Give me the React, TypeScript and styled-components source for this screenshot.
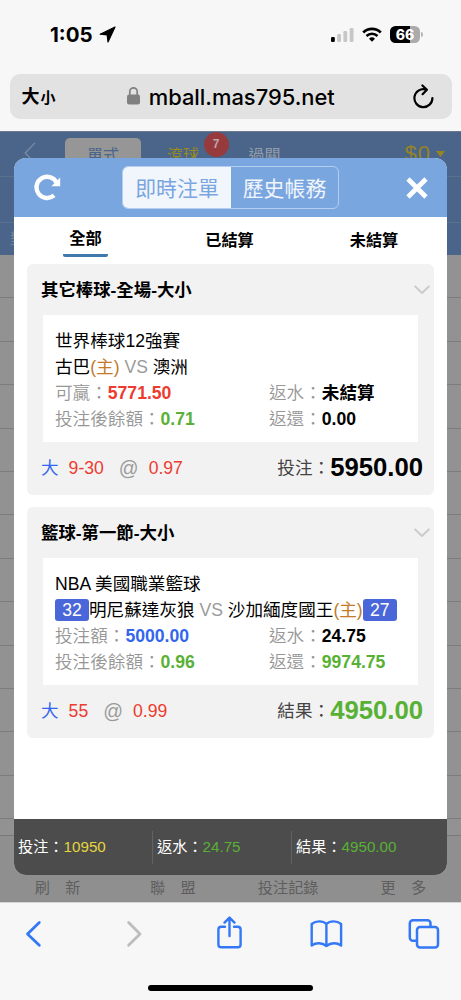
import React from 'react';
import styled, { createGlobalStyle, css } from 'styled-components';

const latin = '"Liberation Sans", "Noto Sans CJK TC", sans-serif';
const system = 'Inter, "Noto Sans CJK TC", sans-serif';

const Global = createGlobalStyle`
  *, *::before, *::after { box-sizing: border-box; }
  body { margin: 0; background: #f7f7f7; font-family: ${latin}; color: #000; }
`;

const Phone = styled.div`
  width: 461px;
  height: 1000px;
  display: flex;
  flex-direction: column;
  background: #f7f7f7;
  overflow: hidden;
`;

/* ---------- browser chrome ---------- */

const StatusBar = styled.div`
  height: 74px;
  flex: none;
  display: flex;
  align-items: center;
  padding: 0 38px 5px 50px;
  font-family: ${system};
`;

const Clock = styled.span`
  font-size: 20.5px;
  font-weight: 700;
  letter-spacing: 0;
  line-height: 24px;
  width: 48.5px;
  white-space: nowrap;
`;

const StatusIcons = styled.div`
  margin-left: auto;
  display: flex;
  align-items: center;
  gap: 8px;
`;

const Battery = styled.div`
  position: relative;
  width: 30px;
  height: 17px;
  margin-right: 3px;
  border-radius: 5.5px;
  background: linear-gradient(90deg, #000 66%, #ababab 66%);
  color: #fff;
  font-size: 14px;
  font-weight: 800;
  line-height: 17px;
  text-align: center;

  &::after {
    content: '';
    position: absolute;
    right: -3px;
    top: 6px;
    width: 2px;
    height: 5px;
    border-radius: 0 2px 2px 0;
    background: #b5b5b5;
  }
`;

const AddressBar = styled.div`
  height: 45px;
  flex: none;
  margin: 0 9.5px 12px;
  padding: 0 18px 0 12px;
  border-radius: 10px;
  background: #e2e2e2;
  display: grid;
  grid-template-columns: 60px 1fr 53px;
  align-items: center;
  font-family: ${system};
`;

const TextSize = styled.span`
  padding-top: 2px;
  font-size: 18px;
  font-weight: 700;
  line-height: 24px;
  white-space: nowrap;
  small { font-size: 15px; margin-left: 1px; }
`;

const Address = styled.div`
  display: flex;
  align-items: center;
  justify-content: center;
  gap: 8.5px;
  font-size: 21.9px;
  font-weight: 500;
  line-height: 26px;
  white-space: nowrap;
`;

const Reload = styled.div`
  display: flex;
  justify-content: flex-end;
`;

const BrowserTools = styled.nav`
  height: 98px;
  flex: none;
  display: flex;
  flex-direction: column;
  justify-content: space-between;
  align-items: center;
  padding: 13px 0 9px;
  border-top: 1px solid #d4d4d4;
`;

const ToolRow = styled.div`
  width: 100%;
  padding: 0 21px 0 20px;
  display: flex;
  justify-content: space-between;
  svg { display: block; overflow: visible; }
`;

const HomeIndicator = styled.div`
  width: 165px;
  height: 6px;
  border-radius: 3px;
  background: #000;
`;

/* ---------- dimmed page ---------- */

const Page = styled.main`
  position: relative;
  flex: 1;
  display: flex;
  flex-direction: column;
  background: #8f8f8f;
  overflow: hidden;
`;

const PageHeader = styled.header`
  height: 124px;
  flex: none;
  background: #4a6589;
  border-top: 1px solid #6b7a8e;
`;

const SportNav = styled.div`
  height: 45px;
  padding-top: 6px;
  display: flex;
  border-bottom: 1px solid #58718f;
  font-size: 16px;
  line-height: 35px;
  color: #939da9;
  white-space: nowrap;
`;

const BackSlot = styled.div`
  width: 65px;
  padding: 4px 0 0 24px;
  svg { display: block; }
`;

const NavTab = styled.div<{ $w: number; $active?: boolean; $color?: string }>`
  position: relative;
  width: ${(p) => p.$w}px;
  height: 34px;
  text-align: center;
  ${(p) => p.$color && css`color: ${p.$color};`}
  ${(p) => p.$active && css`
    background: #969696;
    color: #4a6589;
    border-radius: 5px;
  `}
`;

const CountBadge = styled.span`
  position: absolute;
  left: 62.5px;
  top: -6px;
  width: 25px;
  height: 25px;
  border-radius: 50%;
  background: #973a3d;
  color: #b9a7a9;
  font-size: 12px;
  font-weight: 700;
  line-height: 25px;
`;

const Balance = styled.div`
  margin-left: auto;
  padding-right: 16px;
  display: flex;
  align-items: center;
  gap: 5px;
  height: 31px;
  font-size: 22px;
  letter-spacing: 1px;
  color: #968423;
`;

const SubNav = styled.div`
  height: 46px;
  border-bottom: 1px solid #58718f;
`;

const ColumnHead = styled.div`
  height: 32px;
  padding-left: 10px;
  font-size: 15px;
  line-height: 31px;
  color: #75889f;
`;

const Rows = styled.div`
  height: 581px;
  flex: none;
  background: repeating-linear-gradient(180deg, #929292 0 42.4px, #7c7c7c 42.4px 43.4px);
  border-bottom: 1px solid #777;
`;

const PageFooter = styled.footer`
  flex: 1;
  display: grid;
  grid-template-columns: repeat(4, 1fr);
  align-items: end;
  padding-bottom: 2px;
  font-size: 15.2px;
  line-height: 24px;
  text-align: center;
  color: #5e5e5e;
  white-space: pre;
`;

const Wide = styled.span`
  letter-spacing: 15.4px;
  margin-right: -15.4px;
`;

/* ---------- modal ---------- */

const Modal = styled.section`
  position: absolute;
  left: 14px;
  top: 27px;
  width: 433px;
  height: 717px;
  border-radius: 12px;
  overflow: hidden;
  background: #fff;
  display: flex;
  flex-direction: column;
`;

const ModalHeader = styled.header`
  height: 59px;
  flex: none;
  padding: 0 19px 0 20px;
  display: grid;
  grid-template-columns: 88px 217px 1fr;
  align-items: center;
  background: #7aa6e0;
  svg { display: block; }
  svg:last-child { justify-self: end; }
`;

const Segments = styled.div`
  height: 43px;
  border: 1px solid #b5cdee;
  border-radius: 6px;
  display: grid;
  grid-template-columns: 108px 1fr;
  overflow: hidden;
`;

const Segment = styled.button<{ $active?: boolean }>`
  border: 0;
  padding: 0;
  background: ${(p) => (p.$active ? '#f1f5fc' : 'transparent')};
  color: ${(p) => (p.$active ? '#7aa6e0' : '#f1f5fc')};
  font: 400 20.9px/44px ${latin};
`;

const Tabs = styled.div`
  height: 47px;
  flex: none;
  padding-right: 1px;
  display: grid;
  grid-template-columns: 143px 145px 1fr;
  justify-items: center;
`;

const Tab = styled.div<{ $active?: boolean }>`
  height: 40px;
  padding: ${(p) => (p.$active ? '8px 6px 0' : '10px 0 0')};
  font-size: 16.2px;
  font-weight: 700;
  line-height: 27px;
  border-bottom: 3.5px solid ${(p) => (p.$active ? '#3f79ab' : 'transparent')};
  border-radius: 2px;
`;

const TicketList = styled.div`
  flex: 1;
  padding: 0 13px;
  display: flex;
  flex-direction: column;
  gap: 12px;
`;

const Ticket = styled.article`
  height: 231px;
  padding: 0 16px;
  border-radius: 6px;
  background: #f2f2f2;
  font-size: 17.6px;
  line-height: 26px;
  white-space: nowrap;
`;

const TicketHead = styled.div`
  height: 51px;
  margin: 0 -12px 0 -2px;
  display: flex;
  align-items: center;
  justify-content: space-between;
  font-size: 17.4px;
  font-weight: 700;
`;

const TicketBody = styled.div`
  height: 127px;
  padding: 13px 12px 0;
  background: #fff;
`;

const Line = styled.div`
  height: 25.9px;
`;

const Pair = styled(Line)`
  display: grid;
  grid-template-columns: 214px 1fr;
`;

const Label = styled.span`
  color: #969696;
  font-weight: 350;
`;

const Value = styled.b<{ $color?: string }>`
  color: ${(p) => p.$color ?? '#000'};
  font-weight: 700;
`;

const Tint = styled.span<{ $color: string }>`
  color: ${(p) => p.$color};
`;

const At = styled.span`
  color: #9b9b9b;
  font-size: 19.5px;
`;

const Score = styled.span`
  display: inline-block;
  width: 34px;
  height: 22px;
  border-radius: 3px;
  background: #4a67d9;
  color: #fff;
  line-height: 22px;
  text-align: center;
`;

const TicketFoot = styled.div`
  height: 51px;
  margin: 0 -5px 0 -2px;
  padding-top: 1px;
  display: flex;
  align-items: center;
  justify-content: space-between;
`;

const Pick = styled.div`
  display: flex;
  align-items: center;
  gap: 10px;
`;

const Odds = styled.span`
  display: flex;
  align-items: center;
  gap: 10px;
  margin-left: 5px;
`;

const Total = styled.div`
  display: flex;
  align-items: center;
  color: #444;
  b { font-size: 25.7px; line-height: 30px; margin-top: -2px; }
`;

const Summary = styled.footer`
  height: 56px;
  flex: none;
  display: grid;
  grid-template-columns: 138px 139px 1fr;
  align-items: center;
  background: #4c4c4c;
  color: #fff;
  font-size: 15.2px;
  line-height: 24px;
`;

const SummaryItem = styled.div`
  height: 33px;
  padding: 4px 0 0 4px;
  white-space: nowrap;
  & + & { border-left: 1px solid #626262; }
`;

const RED = '#ee3b2f';
const GREEN = '#58b135';
const BLUE = '#3366ee';
const ORANGE = '#c47a2b';
const GREY = '#9b9b9b';

type TicketData = {
  title: string;
  league: string;
  match: React.ReactNode;
  first: [string, string, string];
  rebate: string;
  balance: string;
  returned: [string, string?];
  line: string;
  odds: string;
  total: [string, string, string?];
};

const tickets: TicketData[] = [
  {
    title: '其它棒球-全場-大小',
    league: '世界棒球12強賽',
    match: (
      <>
        古巴<Tint $color={ORANGE}>(主)</Tint> <Tint $color={GREY}>VS</Tint> 澳洲
      </>
    ),
    first: ['可贏：', '5771.50', RED],
    rebate: '未結算',
    balance: '0.71',
    returned: ['0.00'],
    line: '9-30',
    odds: '0.97',
    total: ['投注：', '5950.00'],
  },
  {
    title: '籃球-第一節-大小',
    league: 'NBA 美國職業籃球',
    match: (
      <>
        <Score>32</Score>明尼蘇達灰狼 <Tint $color={GREY}>VS</Tint> 沙加緬度國王
        <Tint $color={ORANGE}>(主)</Tint>
        <Score>27</Score>
      </>
    ),
    first: ['投注額：', '5000.00', BLUE],
    rebate: '24.75',
    balance: '0.96',
    returned: ['9974.75', GREEN],
    line: '55',
    odds: '0.99',
    total: ['結果：', '4950.00', GREEN],
  },
];

const Chevron = () => (
  <svg width="16" height="10" viewBox="0 0 16 10" fill="none" stroke="#cbcbcb" strokeWidth="1.9" strokeLinecap="round" strokeLinejoin="round">
    <path d="M1.2 1.5 8 8l6.8-6.5" />
  </svg>
);

const TicketCard = ({ t }: { t: TicketData }) => (
  <Ticket>
    <TicketHead>
      <span>{t.title}</span>
      <Chevron />
    </TicketHead>
    <TicketBody>
      <Line>{t.league}</Line>
      <Line>{t.match}</Line>
      <Pair>
        <span><Label>{t.first[0]}</Label><Value $color={t.first[2]}>{t.first[1]}</Value></span>
        <span><Label>返水：</Label><Value>{t.rebate}</Value></span>
      </Pair>
      <Pair>
        <span><Label>投注後餘額：</Label><Value $color={GREEN}>{t.balance}</Value></span>
        <span><Label>返還：</Label><Value $color={t.returned[1]}>{t.returned[0]}</Value></span>
      </Pair>
    </TicketBody>
    <TicketFoot>
      <Pick>
        <Tint $color={BLUE}>大</Tint>
        <Tint $color={RED}>{t.line}</Tint>
        <Odds>
          <At>@</At>
          <Tint $color={RED}>{t.odds}</Tint>
        </Odds>
      </Pick>
      <Total>
        {t.total[0]}
        <Value $color={t.total[2]}>{t.total[1]}</Value>
      </Total>
    </TicketFoot>
  </Ticket>
);

export default function App() {
  return (
    <Phone lang="zh-Hant">
      <Global />
      <StatusBar>
        <Clock>1:05</Clock>
        <svg width="17" height="17" viewBox="0 0 17 17" stroke="#000" strokeWidth="1.2" strokeLinejoin="round">
          <path d="M16 1 1.2 8.200 8.200 8.900 9 15.900Z" />
        </svg>
        <StatusIcons>
          <svg width="24" height="16" viewBox="0 0 24 16">
            <rect x="1" y="10" width="3.8" height="5" rx="1.2" />
            <g fill="#c6c6c6">
              <rect x="7.200" y="7" width="3.800" height="8" rx="1.200" />
              <rect x="13.400" y="4" width="3.800" height="11" rx="1.200" />
              <rect x="19.700" y="1" width="3.800" height="14" rx="1.200" />
            </g>
          </svg>
          <svg width="20" height="16" viewBox="0 0 20 16" fill="none" stroke="#000" strokeWidth="2.600">
            <path d="M1.200 5.500a12.500 12.500 0 0 1 17.600 0M4.500 9a7.800 7.800 0 0 1 11 0" />
            <path d="M10 14.800 7 11.800a4.300 4.300 0 0 1 6 0Z" fill="#000" stroke="none" />
          </svg>
          <Battery>66</Battery>
        </StatusIcons>
      </StatusBar>
      <AddressBar>
        <TextSize>大<small>小</small></TextSize>
        <Address>
          <svg width="13" height="19" viewBox="0 0 13 19">
            <rect x="0" y="7.500" width="13" height="10" rx="2" fill="#808080" />
            <path d="M2.800 8V4.500a3.700 3.700 0 0 1 7.400 0V8" fill="none" stroke="#808080" strokeWidth="1.700" />
          </svg>
          mball.mas795.net
        </Address>
        <Reload>
          <svg width="21" height="25" viewBox="0 0 21 25" fill="none" stroke="#000" strokeWidth="2.200" strokeLinecap="round" strokeLinejoin="round">
            <path d="M12.600 5.400A9 9 0 1 0 19.400 14M9.400 1.500l4.500 4.200-4.300 4.500" />
          </svg>
        </Reload>
      </AddressBar>

      <Page>
        <PageHeader>
          <SportNav>
            <BackSlot>
              <svg width="12" height="22" viewBox="0 0 12 22" fill="none" stroke="#7f8fa5" strokeWidth="1.2">
                <path d="M11 .8 1.2 11 11 21.2" />
              </svg>
            </BackSlot>
            <NavTab $w={76} $active>單式</NavTab>
            <NavTab $w={84} $color="#988a20">滾球<CountBadge>7</CountBadge></NavTab>
            <NavTab $w={79}>過關</NavTab>
            <Balance>
              $0
              <svg width="9" height="6" viewBox="0 0 9 6"><path d="M0 0h9L4.5 6Z" fill="#968423" /></svg>
            </Balance>
          </SportNav>
          <SubNav />
          <ColumnHead>對</ColumnHead>
        </PageHeader>
        <Rows />
        <PageFooter>
          <Wide>刷新</Wide>
          <Wide>聯盟</Wide>
          <span>投注記錄</span>
          <Wide>更多</Wide>
        </PageFooter>

        <Modal>
          <ModalHeader>
            <svg width="27" height="27" viewBox="0 0 27 27" fill="none" stroke="#fff" strokeWidth="4.400">
              <path d="M20.100 21.400A10.600 10.600 0 1 1 22.500 8.500" />
              <path d="M26.200 3.600V12.200H17.400Z" fill="#fff" stroke="none" />
            </svg>
            <Segments>
              <Segment $active>即時注單</Segment>
              <Segment>歷史帳務</Segment>
            </Segments>
            <svg width="22" height="22" viewBox="0 0 22 22" stroke="#fff" strokeWidth="4.600">
              <path d="m2 2 18 18M20 2 2 20" />
            </svg>
          </ModalHeader>
          <Tabs>
            <Tab $active>全部</Tab>
            <Tab>已結算</Tab>
            <Tab>未結算</Tab>
          </Tabs>
          <TicketList>
            {tickets.map((t) => <TicketCard key={t.title} t={t} />)}
          </TicketList>
          <Summary>
            <SummaryItem>投注：<Tint $color="#e6d53c">10950</Tint></SummaryItem>
            <SummaryItem>返水：<Tint $color={GREEN}>24.75</Tint></SummaryItem>
            <SummaryItem>結果：<Tint $color={GREEN}>4950.00</Tint></SummaryItem>
          </Summary>
        </Modal>
      </Page>

      <BrowserTools>
        <ToolRow>
          <svg width="28" height="36" viewBox="0 0 28 36" fill="none" stroke="#3478f6" strokeWidth="2.800" strokeLinecap="round" strokeLinejoin="round">
            <path d="M19.300 6.500 7.500 18l11.800 11.200" />
          </svg>
          <svg width="28" height="36" viewBox="0 0 28 36" fill="none" stroke="#bdbdbd" strokeWidth="2.800" strokeLinecap="round" strokeLinejoin="round">
            <path d="M15.600 6.500 27 18 15.600 29.200" />
          </svg>
          <svg width="36" height="36" viewBox="0 0 36 36" fill="none" stroke="#3478f6" strokeWidth="2.400" strokeLinecap="round" strokeLinejoin="round">
            <path d="M19 10.700h-3.800a2.800 2.800 0 0 0-2.800 2.800v14.900a2.800 2.800 0 0 0 2.800 2.800h16.600a2.800 2.800 0 0 0 2.800-2.800V13.500a2.800 2.800 0 0 0-2.800-2.800H28M23.500 20V2M18.500 6.600l5-5 5 5" />
          </svg>
          <svg width="36" height="36" viewBox="0 0 36 36" fill="none" stroke="#3478f6" strokeWidth="2.400" strokeLinecap="round" strokeLinejoin="round">
            <path d="M19.400 8c-3.500-3.500-10.500-3.500-14.700 0v21.500c4.300-3 10.300-3 14.700.5 4.400-3.500 10.400-3.500 14.700-.5V8c-4.200-3.500-11.200-3.500-14.700 0v21.500" />
          </svg>
          <svg width="32" height="36" viewBox="0 0 32 36" fill="none" stroke="#3478f6" strokeWidth="2.500" strokeLinejoin="round">
            <rect x="9" y="11" width="21" height="20.500" rx="3" />
            <path d="M8.500 24.800H5a3.200 3.200 0 0 1-3.200-3.200V7.500A3.200 3.200 0 0 1 5 4.300h14.500a3 3 0 0 1 3 3v3.500" />
          </svg>
        </ToolRow>
        <HomeIndicator />
      </BrowserTools>
    </Phone>
  );
}
